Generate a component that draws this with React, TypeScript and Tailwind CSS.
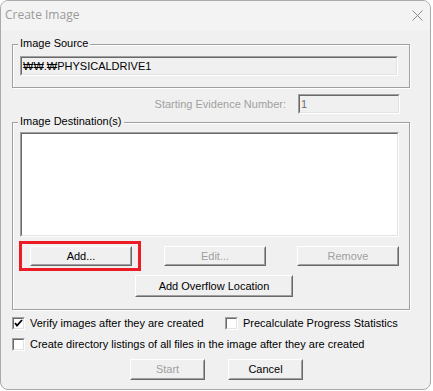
import React from 'react';

const raised =
  'border border-t-white border-l-white border-r-[#696969] border-b-[#696969] bg-[#f0f0f0]';
const raisedInner =
  'w-full h-full flex items-center justify-center border border-t-[#f0f0f0] border-l-[#f0f0f0] border-r-[#a0a0a0] border-b-[#a0a0a0]';
const sunken = 'border border-t-[#a0a0a0] border-l-[#a0a0a0] border-r-white border-b-white';
const sunkenInner =
  'w-full h-full border border-t-[#696969] border-l-[#696969] border-r-[#e3e3e3] border-b-[#e3e3e3]';
const etched = 'border border-[#a0a0a0] shadow-[inset_1px_1px_0_#fff,1px_1px_0_#fff]';

function Button({ label, width, height = 20, disabled }: { label: string; width: number; height?: number; disabled?: boolean }) {
  return (
    <div className={raised} style={{ width, height }}>
      <div className={`${raisedInner} ${disabled ? 'text-[#a0a0a0]' : 'text-black'}`}>{label}</div>
    </div>
  );
}

function Checkbox({ checked, label }: { checked?: boolean; label: string }) {
  return (
    <div className="flex items-center h-[13px]">
      <div className={`${sunken} w-[13px] h-[13px] shrink-0`}>
        <div className={`${sunkenInner} bg-white flex items-center justify-center`}>
          {checked && (
            <svg width="9" height="9" viewBox="0 0 9 9">
              <path d="M1 4 L3 6.5 L8 1" stroke="#000" strokeWidth="1.8" fill="none" />
            </svg>
          )}
        </div>
      </div>
      <span className="ml-[5px] leading-[13px] whitespace-nowrap">{label}</span>
    </div>
  );
}

function GroupLabel({ text }: { text: string }) {
  return (
    <span className="absolute left-[5px] -top-[8px] px-[2px] bg-[#f0f0f0] leading-[13px] text-black">{text}</span>
  );
}

export default function App() {
  return (
    <div className="w-[433px] h-[391px] bg-white">
      <div className="w-[431px] h-[390px] rounded-[8px] border border-[#aaaaaa] bg-[#f0f0f0] flex flex-col overflow-hidden font-['Liberation_Sans',Arial,sans-serif] text-[11px] text-black">
        {/* title bar */}
        <div className="h-[30px] shrink-0 bg-[#f3f3f3] flex items-center justify-between pl-[4px] pr-[7px]">
          <span className="font-['Open_Sans',sans-serif] text-[12px] text-[#9a9a9a] -mt-[2px]">Create Image</span>
          <svg width="11" height="11" viewBox="0 0 11 11" className="-mt-[2px]">
            <path d="M0.5 0.5 L10.5 10.5 M10.5 0.5 L0.5 10.5" stroke="#8a8a8a" strokeWidth="1" />
          </svg>
        </div>

        <div className="flex-1 pl-[11px]">
          {/* Image Source */}
          <div className={`${etched} relative mt-[13px] w-[398px] h-[44px] pt-[11px] pl-[7px]`}>
            <GroupLabel text="Image Source" />
            <div className={`${sunken} w-[378px] h-[20px]`}>
              <div className={`${sunkenInner} flex items-center pl-[1px] leading-[13px]`}>₩₩.₩PHYSICALDRIVE1</div>
            </div>
          </div>

          {/* Starting evidence number */}
          <div className="mt-[6px] w-[388px] flex items-center justify-end">
            <span className="text-[#a0a0a0] mr-[12px]">Starting Evidence Number:</span>
            <div className={`${sunken} w-[102px] h-[20px]`}>
              <div className={`${sunkenInner} flex items-center pl-[1px] text-[#6d6d6d]`}>1</div>
            </div>
          </div>

          {/* Image Destination(s) */}
          <div className={`${etched} relative mt-[8px] w-[398px] h-[188px] pt-[9px] pl-[7px]`}>
            <GroupLabel text="Image Destination(s)" />
            <div className={`${sunken} w-[379px] h-[105px]`}>
              <div className={`${sunkenInner} bg-white`} />
            </div>
            <div className="mt-[9px] flex items-center">
              <div className="relative ml-[10px]">
                <Button label="Add..." width={102} />
                <div className="absolute -left-[11px] -top-[5px] -right-[9px] -bottom-[5px] border-[3px] border-[#ed1c24] pointer-events-none" />
              </div>
              <div className="ml-[32px]">
                <Button label="Edit..." width={102} disabled />
              </div>
              <div className="ml-[31px]">
                <Button label="Remove" width={102} disabled />
              </div>
            </div>
            <div className="mt-[9px] ml-[115px]">
              <Button label="Add Overflow Location" width={158} height={22} />
            </div>
          </div>

          {/* options */}
          <div className="mt-[7px] flex items-center">
            <div className="w-[213px]">
              <Checkbox checked label="Verify images after they are created" />
            </div>
            <Checkbox label="Precalculate Progress Statistics" />
          </div>
          <div className="mt-[8px]">
            <Checkbox label="Create directory listings of all files in the image after they are created" />
          </div>

          <div className="mt-[8px] flex items-center pl-[118px]">
            <Button label="Start" width={75} height={21} disabled />
            <div className="ml-[23px]">
              <Button label="Cancel" width={75} height={21} />
            </div>
          </div>
        </div>
      </div>
    </div>
  );
}
